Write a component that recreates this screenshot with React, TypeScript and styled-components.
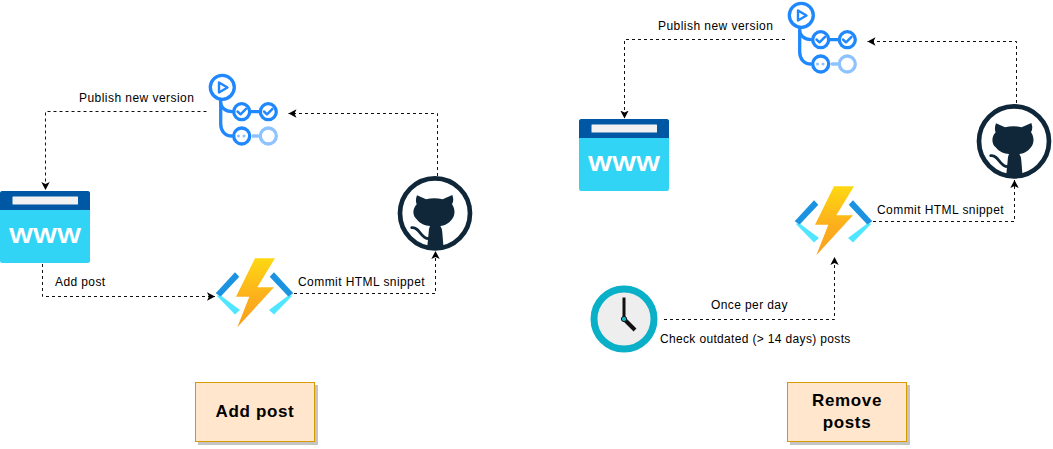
import React from "react";
import styled, { createGlobalStyle } from "styled-components";

const GlobalStyle = createGlobalStyle`
  html, body {
    margin: 0;
    background: #fff;
  }
`;

const Page = styled.main`
  display: flex;
  width: 1053px;
  height: 449px;
  overflow: hidden;
  background: #fff;
  font-family: "Liberation Sans", Arial, sans-serif;
`;

// one diagram with its caption note sitting at the bottom
const Panel = styled.section<{ $width: number; $noteInset: number }>`
  position: relative;
  box-sizing: border-box;
  flex: none;
  width: ${(p) => p.$width}px;
  padding: 0 0 7px ${(p) => p.$noteInset}px;
  display: flex;
  align-items: flex-end;
`;

const Node = styled.div<{ $x: number; $y: number }>`
  position: absolute;
  left: ${(p) => p.$x}px;
  top: ${(p) => p.$y}px;
  line-height: 0;
`;

const WireLayer = styled.svg`
  position: absolute;
  left: 0;
  top: 0;
  pointer-events: none;
`;

const Label = styled.span<{ $x: number; $y: number; $spacing: number }>`
  position: absolute;
  left: ${(p) => p.$x}px;
  top: ${(p) => p.$y}px;
  font-size: 12px;
  line-height: 14px;
  letter-spacing: ${(p) => p.$spacing}px;
  color: #000;
  white-space: nowrap;
`;

const Note = styled.div`
  box-sizing: border-box;
  width: 120px;
  height: 60px;
  display: flex;
  align-items: center;
  justify-content: center;
  text-align: center;
  background: #ffe6cc;
  border: 1px solid #d79b00;
  box-shadow: 3px 3px 0 #c4c4c4;
  font-size: 17px;
  font-weight: 700;
  line-height: 22px;
  letter-spacing: 0.65px;
  color: #000;
`;

const ActionsIcon = () => (
  <svg width="72" height="76" viewBox="0 0 72 76" fill="none">
    <g stroke="#2088ff" strokeWidth="3.3" strokeLinecap="round" strokeLinejoin="round">
      <circle cx="14.3" cy="14.3" r="12" />
      <path d="M11 9.5 L19.5 14.5 L11 19.5Z" strokeWidth="2.4" />
      <path d="M12.7 27 V30 C12.7 34 17 38.7 24 38.7" />
      <path d="M12.7 30 V51 C12.7 58 17 63 24 63" />
      <circle cx="33.7" cy="38.7" r="8" />
      <circle cx="60.3" cy="38.7" r="8" />
      <path d="M42.5 38.7 H51.5" />
      <circle cx="33.7" cy="63" r="8" />
      <path d="M29.5 38.5 L32.5 41.3 L38 35.8" strokeWidth="2.4" />
      <path d="M56 38.5 L59 41.3 L64.5 35.8" strokeWidth="2.4" />
    </g>
    <g stroke="#8ec3ff" strokeWidth="3.3" strokeLinecap="round">
      <circle cx="60.3" cy="63" r="8" />
      <path d="M45 63 H50" />
    </g>
    <circle cx="30.5" cy="63" r="1.5" fill="#8ec3ff" />
    <circle cx="36" cy="63" r="1.5" fill="#8ec3ff" />
  </svg>
);

const SiteIcon = () => (
  <svg width="90" height="72" viewBox="0 0 90 72">
    <rect width="90" height="72" rx="2.5" fill="#32d4f5" />
    <path d="M0 19 V2.5 A2.5 2.5 0 0 1 2.5 0 H87.5 A2.5 2.5 0 0 1 90 2.5 V19Z" fill="#0058a5" />
    <rect x="12.5" y="5.5" width="65.5" height="8" rx="0.5" fill="#f2f2f2" />
    <text
      x="9"
      y="52"
      textLength="72"
      lengthAdjust="spacingAndGlyphs"
      fill="#fff"
      fontFamily="'Liberation Sans', Arial, sans-serif"
      fontWeight="700"
      fontSize="22.5"
    >
      WWW
    </text>
  </svg>
);

const FunctionIcon = () => (
  <svg width="79" height="70" viewBox="0 0 79 70">
    <defs>
      <linearGradient id="bolt" x1="0" y1="0" x2="0" y2="1">
        <stop offset="0" stopColor="#fed812" />
        <stop offset="0.55" stopColor="#fdb01c" />
        <stop offset="1" stopColor="#f7a01f" />
      </linearGradient>
    </defs>
    <path d="M5 37 L25 52 L20 56.5 L1.7 37.7Z" fill="#50e6ff" />
    <path d="M74 37 L54 52 L59 56.5 L77.3 37.7Z" fill="#50e6ff" />
    <path d="M0.7 35.3 L20 14.3 L24.3 18.7 L5.7 38.5Z" fill="#1b93e0" />
    <path d="M78.3 35.3 L59 14.3 L54.7 18.7 L73.3 38.5Z" fill="#1b93e0" />
    <path d="M40 0.3 H60 L42.3 29.3 H59 L22.3 69.3 L34.3 38.7 H21Z" fill="url(#bolt)" />
  </svg>
);

const GithubIcon = () => (
  <svg width="90" height="90" viewBox="0 0 270 270">
    <circle cx="135" cy="130" r="105" fill="none" stroke="#0f2739" strokeWidth="14" />
    <path
      d="M81 76 L108 88 Q133 81 158 88 L187 75 Q193 92 186 103 C197 118 195 138 186 148 C176 162 162 167 151 168 Q157 176 157 188 L161 238 H111 L116 188 Q116 176 120 168 C106 167 90 162 80 148 C68 138 66 118 80 103 Q75 92 81 76Z"
      fill="#0f2739"
    />
    <path d="M65 173 C90 170 90 205 116 206" fill="none" stroke="#0f2739" strokeWidth="8" strokeLinecap="round" />
  </svg>
);

const ClockIcon = () => (
  <svg width="68" height="68" viewBox="0 0 68 68">
    <circle cx="34" cy="34" r="30" fill="#eeeeee" stroke="#0ab0c8" strokeWidth="7" />
    <path d="M34 34 V12.5" stroke="#111" strokeWidth="3" />
    <path d="M34 34 L45 45" stroke="#111" strokeWidth="4" />
    <circle cx="34" cy="34" r="2.6" fill="#13b5cb" stroke="#111" strokeWidth="1" />
  </svg>
);

const Wires = ({ width, headId, paths }: { width: number; headId: string; paths: string[] }) => (
  <WireLayer width={width} height="449" viewBox={`0 0 ${width} 449`} fill="none">
    <defs>
      <marker id={headId} markerUnits="userSpaceOnUse" markerWidth="9" markerHeight="10" refX="8" refY="5" orient="auto">
        <path d="M8 5 L0 9.2 L2 5 L0 0.8Z" fill="#000" />
      </marker>
    </defs>
    {paths.map((d) => (
      <path key={d} d={d} stroke="#111" strokeDasharray="3 3" markerEnd={`url(#${headId})`} />
    ))}
  </WireLayer>
);

const addWires = [
  "M206.5 111.5 H45.5 V190",
  "M437.5 176 V113.5 H288.5",
  "M42.5 264 V296.5 H215",
  "M294 293.5 H435.5 V251",
];

const removeWires = [
  "M275 39.5 H114.5 V118.5",
  "M506.5 103 V41.5 H357.5",
  "M363 221.5 H504.5 V180",
  "M154 319.5 H324.5 V257",
];

const addLabels = [
  { x: 79, y: 91, text: "Publish new version", spacing: 0.45 },
  { x: 55, y: 275, text: "Add post", spacing: 0.4 },
  { x: 298, y: 275, text: "Commit HTML snippet", spacing: 0.43 },
];

const removeLabels = [
  { x: 148, y: 19, text: "Publish new version", spacing: 0.45 },
  { x: 367, y: 203, text: "Commit HTML snippet", spacing: 0.43 },
  { x: 201, y: 298, text: "Once per day", spacing: 0.4 },
  { x: 150, y: 332, text: "Check outdated (> 14 days) posts", spacing: 0.34 },
];

export default function App() {
  return (
    <Page>
      <GlobalStyle />
      <Panel $width={510} $noteInset={195}>
        <Node $x={208} $y={73}>
          <ActionsIcon />
        </Node>
        <Node $x={0} $y={191}>
          <SiteIcon />
        </Node>
        <Node $x={215} $y={258}>
          <FunctionIcon />
        </Node>
        <Node $x={390} $y={170}>
          <GithubIcon />
        </Node>
        <Wires width={510} headId="addHead" paths={addWires} />
        {addLabels.map((l) => (
          <Label key={l.text} $x={l.x} $y={l.y} $spacing={l.spacing}>
            {l.text}
          </Label>
        ))}
        <Note>Add post</Note>
      </Panel>

      <Panel $width={543} $noteInset={277}>
        <Node $x={277} $y={1}>
          <ActionsIcon />
        </Node>
        <Node $x={69} $y={119}>
          <SiteIcon />
        </Node>
        <Node $x={284} $y={186}>
          <FunctionIcon />
        </Node>
        <Node $x={459} $y={98}>
          <GithubIcon />
        </Node>
        <Node $x={80} $y={285}>
          <ClockIcon />
        </Node>
        <Wires width={543} headId="removeHead" paths={removeWires} />
        {removeLabels.map((l) => (
          <Label key={l.text} $x={l.x} $y={l.y} $spacing={l.spacing}>
            {l.text}
          </Label>
        ))}
        <Note>
          Remove
          <br />
          posts
        </Note>
      </Panel>
    </Page>
  );
}
